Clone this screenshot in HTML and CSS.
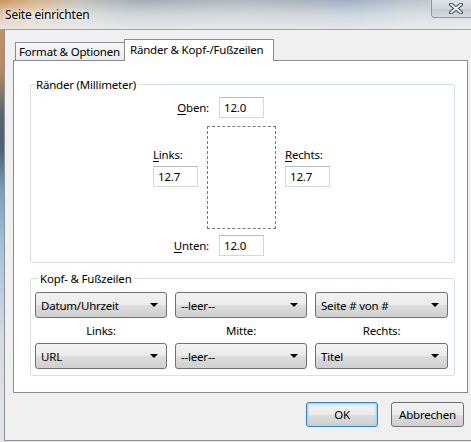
FILE: index.html
```html
<!DOCTYPE html>
<html lang="de">
<head>
<meta charset="utf-8">
<title>Seite einrichten</title>
<link rel="stylesheet" href="styles.css">
</head>
<body>
<div class="window">
  <div class="titlebar">
    <span class="title">Seite einrichten</span>
    <div class="close">
      <svg width="14" height="11" viewBox="0 0 14 11">
        <path d="M2 1.5 L12 9.5 M12 1.5 L2 9.5" stroke="#4a4f57" stroke-width="4" stroke-linecap="round"/>
        <path d="M2 1.5 L12 9.5 M12 1.5 L2 9.5" stroke="#eef1f4" stroke-width="2" stroke-linecap="round"/>
      </svg>
    </div>
  </div>
  <div class="client">
    <div class="tabs">
      <div class="tab">Format &amp; Optionen</div>
      <div class="tab active">Ränder &amp; Kopf-/Fußzeilen</div>
    </div>
    <div class="panel">
      <fieldset class="group margins-group">
        <legend>Ränder (Millimeter)</legend>
        <div class="margins">
          <div class="mrow-tb">
            <span class="lbl"><u>O</u>ben:</span>
            <span class="input">12.0</span>
          </div>
          <div class="mrow-mid">
            <div class="side">
              <span class="lbl"><u>L</u>inks:</span>
              <span class="input">12.7</span>
            </div>
            <div class="page"></div>
            <div class="side">
              <span class="lbl"><u>R</u>echts:</span>
              <span class="input">12.7</span>
            </div>
          </div>
          <div class="mrow-tb bottom">
            <span class="lbl"><u>U</u>nten:</span>
            <span class="input">12.0</span>
          </div>
        </div>
      </fieldset>
      <fieldset class="group hf-group">
        <legend>Kopf- &amp; Fußzeilen</legend>
        <div class="hf">
          <div class="select"><span>Datum/Uhrzeit</span><i class="arrow"></i></div>
          <div class="select"><span>--leer--</span><i class="arrow"></i></div>
          <div class="select"><span>Seite # von #</span><i class="arrow"></i></div>
          <div class="hf-label">Links:</div>
          <div class="hf-label">Mitte:</div>
          <div class="hf-label">Rechts:</div>
          <div class="select"><span>URL</span><i class="arrow"></i></div>
          <div class="select"><span>--leer--</span><i class="arrow"></i></div>
          <div class="select"><span>Titel</span><i class="arrow"></i></div>
        </div>
      </fieldset>
    </div>
    <div class="buttons">
      <button class="btn default">OK</button>
      <button class="btn">Abbrechen</button>
    </div>
  </div>
</div>
</body>
</html>
```

FILE: styles.css
```css
html, body {
  margin: 0;
  padding: 0;
}
body {
  width: 471px;
  height: 442px;
  overflow: hidden;
  font-family: "Noto Sans", "Open Sans", sans-serif;
  font-size: 11.5px;
  letter-spacing: -0.2px;
  color: #000;
  background: linear-gradient(to bottom, #c99a6a 0, #b58b60 70px, #56636f 115px, #4d6275 150px, #7f9db6 190px, #aac3d8 250px, #d4dbe1 340px, #e6e6e6 442px);
}
.window {
  width: 471px;
  height: 442px;
}
.titlebar {
  height: 29px;
  display: flex;
  justify-content: space-between;
  align-items: flex-start;
  background:
    linear-gradient(to bottom, rgba(240,242,244,0) 0, rgba(240,242,244,0.55) 14px, rgba(240,242,244,0.85) 29px),
    linear-gradient(to right, #c8935f 0, #d9b48b 35px, #c2c2bd 80px, #a5adb5 140px, #b1b8bf 240px, #a9b2bb 300px, #9fb0c5 350px, #bcc4cc 410px, #c9ced3 471px);
}
.title {
  margin: 7px 0 0 5px;
  line-height: 16px;
  font-size: 12px;
  text-shadow: 0 0 6px #fff, 0 0 3px #fff;
}
.close {
  width: 40px;
  height: 18px;
  box-sizing: border-box;
  border: 1px solid #8f959c;
  border-top: none;
  border-right: none;
  border-bottom-left-radius: 4px;
  background: linear-gradient(to bottom, #dfe3e7 0, #cfd5db 50%, #c3cad1 51%, #d5dbe0 100%);
  display: flex;
  align-items: center;
  padding-left: 17px;
}
.close svg {
  display: block;
}
.client {
  margin-left: 4px;
  width: 480px;
  height: 412px;
  box-sizing: border-box;
  background: #f0f0f0;
  border-top: 1px solid #a0a4a8;
  border-left: 1px solid #8e9296;
  border-bottom: 1px solid #8e9296;
}
.tabs {
  display: flex;
  align-items: flex-end;
  padding: 9px 0 0 10px;
  height: 30px;
  box-sizing: border-box;
}
.tab {
  height: 18px;
  box-sizing: border-box;
  border: 1px solid #898c95;
  border-bottom: none;
  background: linear-gradient(to bottom, #f6f6f6 0, #ececec 100%);
  padding: 0 3px;
  line-height: 17px;
  width: 110px;
  white-space: nowrap;
}
.tab.active {
  position: relative;
  z-index: 1;
  height: 22px;
  margin-bottom: -1px;
  width: 150px;
  margin-left: -1px;
  background: #fff;
  padding: 0 5px;
  line-height: 19px;
}
.panel {
  margin-left: 8px;
  width: 455px;
  height: 333px;
  box-sizing: border-box;
  background: #fff;
  border: 1px solid #898c95;
  padding: 16px 0 0 16px;
}
.group {
  margin: 0;
  padding: 0;
  width: 425px;
  box-sizing: border-box;
  border: 1px solid #d5dfe5;
  border-radius: 3px;
}
.group legend {
  padding: 0 2px;
  margin-left: 3px;
  line-height: 15px;
  height: 15px;
}
.margins-group {
  padding: 5px 0 6px 0;
}
.margins {
  margin-left: 122px;
  display: flex;
  flex-direction: column;
}
.mrow-tb {
  width: 123px;
  box-sizing: border-box;
  padding-right: 12px;
  display: flex;
  justify-content: flex-end;
  align-items: center;
  gap: 10px;
}
.mrow-tb.bottom {
  margin-top: 6px;
}
.mrow-mid {
  display: flex;
  gap: 9px;
  margin-top: 8px;
  height: 103px;
}
.side {
  width: 45px;
  display: flex;
  flex-direction: column;
  padding-top: 21px;
  gap: 4px;
}
.lbl {
  line-height: 15px;
  white-space: nowrap;
}
.lbl u {
  text-underline-offset: 2px;
}
.input {
  width: 45px;
  height: 21px;
  box-sizing: border-box;
  border: 1px solid #d3d6da;
  border-top-color: #b7bcc2;
  background: #fff;
  padding-left: 4px;
  line-height: 19px;
}
.page {
  width: 69px;
  height: 103px;
  box-sizing: border-box;
  border: 1px dashed #7a7a7a;
}
.hf-group {
  margin-top: 8px;
  padding: 6px 0 6px 4px;
}
.hf {
  display: grid;
  grid-template-columns: 132px 132px 133px;
  grid-template-rows: 26px 25px 26px;
  column-gap: 8px;
}
.select {
  box-sizing: border-box;
  border: 1px solid #707070;
  border-radius: 3px;
  background: linear-gradient(to bottom, #f2f2f2 0, #ebebeb 50%, #dddddd 51%, #cfcfcf 100%);
  display: flex;
  align-items: center;
  justify-content: space-between;
  padding: 0 8px 0 5px;
  white-space: nowrap;
}
.arrow {
  width: 0;
  height: 0;
  border-left: 4px solid transparent;
  border-right: 4px solid transparent;
  border-top: 4px solid #000;
}
.hf-label {
  display: flex;
  align-items: center;
  justify-content: center;
}
.buttons {
  width: 463px;
  box-sizing: border-box;
  display: flex;
  justify-content: flex-end;
  gap: 13px;
  padding-right: 4px;
  margin-top: 9px;
}
.btn {
  font-family: "Noto Sans", "Open Sans", sans-serif;
  font-size: 11.5px;
  letter-spacing: -0.2px;
  color: #000;
  height: 25px;
  box-sizing: border-box;
  border: 1px solid #707070;
  border-radius: 3px;
  background: linear-gradient(to bottom, #f2f2f2 0, #ebebeb 50%, #dddddd 51%, #cfcfcf 100%);
  padding: 0;
  margin: 0;
}
.btn.default {
  width: 72px;
  border-color: #3c7fb1;
  box-shadow: inset 0 0 0 1px #9fdcf5, inset 0 0 1px 2px rgba(160,220,245,0.5);
}
.btn:not(.default) {
  width: 73px;
}
```
